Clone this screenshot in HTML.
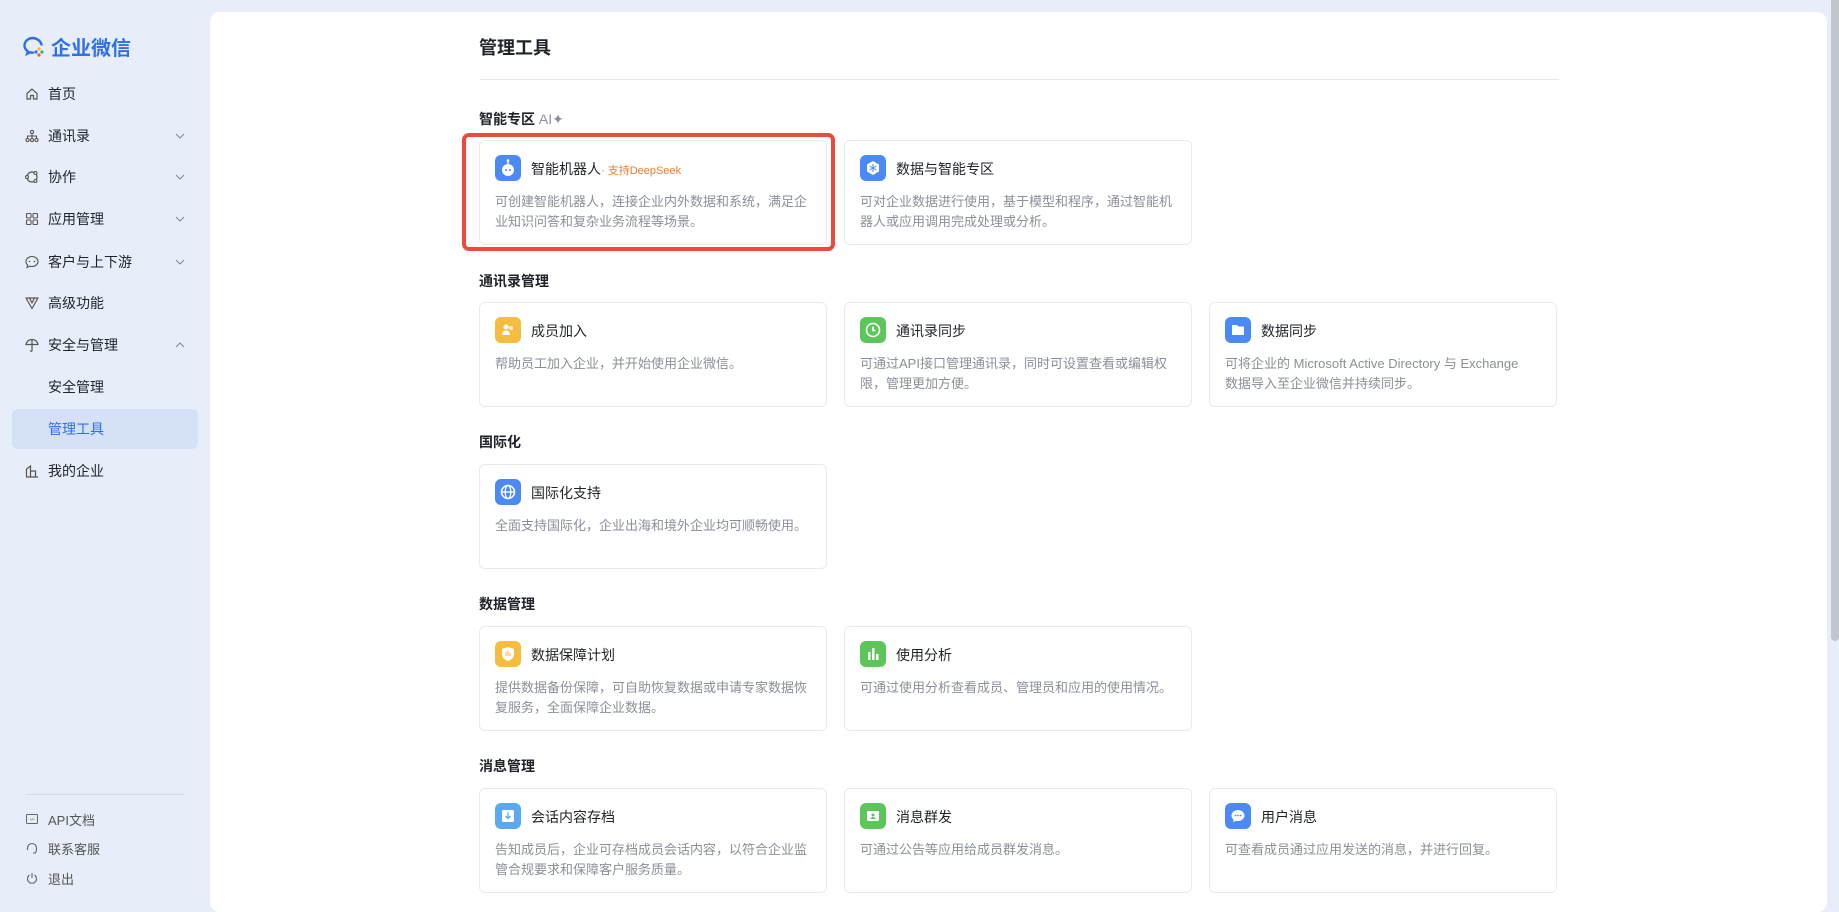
<!DOCTYPE html>
<html><head><meta charset="utf-8"><style>
*{margin:0;padding:0;box-sizing:border-box}
body{width:1839px;height:906px;overflow:hidden;background:#e8eef9;font-family:"Liberation Sans","Noto Sans CJK SC",sans-serif;position:relative;color:#1f2329}
.side{position:absolute;left:0;top:0;width:210px;height:906px}
.logo{position:absolute;left:22px;top:32px;display:flex;align-items:center}
.logo span{font-size:20px;font-weight:bold;color:#2f6fe8;margin-left:5px}
.item{position:absolute;left:0;width:210px;height:42px;display:flex;align-items:center;font-size:14px;color:#1f2329}
.item svg.ic{position:absolute;left:25px;width:14px;height:14px}
.item .t{position:absolute;left:48px}
.item .ch{position:absolute;left:174px;width:12px;height:12px}
.hl{position:absolute;left:12px;top:409px;width:186px;height:40px;background:#d4e1f7;border-radius:6px}
.bot{position:absolute;left:0;width:210px;height:24px;display:flex;align-items:center;font-size:13px;color:#555}
.bot svg{position:absolute;left:26px;width:12px;height:12px}
.bot .t{position:absolute;left:48px}
.panel{position:absolute;left:210px;top:12px;width:1617px;height:900px;background:#fff;border-radius:10px}
.sb{position:absolute;left:1831px;top:0;width:8px;height:641px;background:#c1c5ce;border-radius:0 0 4px 4px}
.h1{position:absolute;left:479px;top:34px;font-size:18px;font-weight:bold}
.div{position:absolute;left:480px;top:79px;width:1079px;height:1px;background:#e6e8eb}
.sec{position:absolute;left:479px;font-size:14px;font-weight:bold;color:#1f2329}
.card{position:absolute;width:348px;height:105px;border:1px solid #e8eaed;border-radius:6px;background:#fff}
.card .i{position:absolute;left:15px;top:14px;width:26px;height:26px;border-radius:6px}
.card .tt{position:absolute;left:51px;top:18px;font-size:14px;color:#1f2329}
.card .d{position:absolute;left:15px;top:51px;width:320px;font-size:13px;line-height:20px;color:#8a8f99}
.red{position:absolute;left:462px;top:133px;width:373px;height:118px;border:4px solid #ee4a3c;border-radius:7px}
</style></head><body>
<div class="side">
 <div class="logo"><svg width="24" height="24" viewBox="0 0 24 24"><path d="M11 3C6 3 2.5 6.5 2.5 10.5c0 2.5 1.3 4.5 3.3 5.8l-.7 2.5 3-1.5c1 .3 1.9.4 2.9.4" fill="none" stroke="#2f6fe8" stroke-width="2.4" stroke-linecap="round"/><path d="M19.5 9.5C18.6 6 15.3 3.5 11 3" fill="none" stroke="#2f6fe8" stroke-width="2.4" stroke-linecap="round"/><circle cx="17" cy="14" r="1.6" fill="#f5b82e"/><circle cx="20" cy="17" r="1.6" fill="#3fb34f"/><circle cx="17" cy="20" r="1.6" fill="#ee5a2a"/><circle cx="14" cy="17" r="1.6" fill="#2f6fe8"/></svg><span>企业微信</span></div>
 <div class="hl"></div>
 <div class="item" style="top:73px"><svg class="ic" viewBox="0 0 14 14"><path d="M2 6.5L7 2l5 4.5V12H8.5V8.5h-3V12H2z" fill="none" stroke="#555" stroke-width="1.2"/></svg><span class="t">首页</span></div>
 <div class="item" style="top:115px"><svg class="ic" viewBox="0 0 14 14"><circle cx="7" cy="3" r="1.6" fill="none" stroke="#555" stroke-width="1.1"/><circle cx="2.5" cy="11" r="1.6" fill="none" stroke="#555" stroke-width="1.1"/><circle cx="7" cy="11" r="1.6" fill="none" stroke="#555" stroke-width="1.1"/><circle cx="11.5" cy="11" r="1.6" fill="none" stroke="#555" stroke-width="1.1"/><path d="M2.5 9V7h9v2M7 5v4" fill="none" stroke="#555" stroke-width="1.1"/></svg><span class="t">通讯录</span><svg class="ch" viewBox="0 0 12 12"><path d="M2 4l4 4 4-4" fill="none" stroke="#888" stroke-width="1.1"/></svg></div>
 <div class="item" style="top:156px"><svg class="ic" viewBox="0 0 14 14"><circle cx="7" cy="7" r="5" fill="none" stroke="#555" stroke-width="1.2"/><circle cx="2" cy="7" r="1.5" fill="#e8eef9" stroke="#555" stroke-width="1.1"/><circle cx="10.5" cy="3" r="1.5" fill="#e8eef9" stroke="#555" stroke-width="1.1"/><circle cx="10.5" cy="11" r="1.5" fill="#e8eef9" stroke="#555" stroke-width="1.1"/></svg><span class="t">协作</span><svg class="ch" viewBox="0 0 12 12"><path d="M2 4l4 4 4-4" fill="none" stroke="#888" stroke-width="1.1"/></svg></div>
 <div class="item" style="top:198px"><svg class="ic" viewBox="0 0 14 14"><rect x="1.5" y="1.5" width="4.5" height="4.5" rx="1" fill="none" stroke="#555" stroke-width="1.1"/><rect x="8" y="1.5" width="4.5" height="4.5" rx="1" fill="none" stroke="#555" stroke-width="1.1"/><rect x="1.5" y="8" width="4.5" height="4.5" rx="1" fill="none" stroke="#555" stroke-width="1.1"/><rect x="8" y="8" width="4.5" height="4.5" rx="1" fill="none" stroke="#555" stroke-width="1.1"/></svg><span class="t">应用管理</span><svg class="ch" viewBox="0 0 12 12"><path d="M2 4l4 4 4-4" fill="none" stroke="#888" stroke-width="1.1"/></svg></div>
 <div class="item" style="top:241px"><svg class="ic" viewBox="0 0 14 14"><path d="M7 1.5c3.3 0 6 2.2 6 5s-2.7 5-6 5c-.8 0-1.6-.1-2.3-.4L2 12.5l.7-2.3C1.6 9.2 1 8 1 6.5c0-2.8 2.7-5 6-5z" fill="none" stroke="#555" stroke-width="1.1"/><circle cx="4.5" cy="6.5" r=".8" fill="#555"/><circle cx="9.5" cy="6.5" r=".8" fill="#555"/></svg><span class="t">客户与上下游</span><svg class="ch" viewBox="0 0 12 12"><path d="M2 4l4 4 4-4" fill="none" stroke="#888" stroke-width="1.1"/></svg></div>
 <div class="item" style="top:282px"><svg class="ic" viewBox="0 0 14 14"><path d="M1 2h12L7 12.5z M4.5 2L7 7l2.5-5" fill="none" stroke="#555" stroke-width="1.2" stroke-linejoin="round"/></svg><span class="t">高级功能</span></div>
 <div class="item" style="top:324px"><svg class="ic" viewBox="0 0 14 14"><path d="M1 6.5C1.5 3.5 4 1.5 7 1.5s5.5 2 6 5z M7 1v11.5c0 1-1.5 1-1.8 0" fill="none" stroke="#555" stroke-width="1.2"/></svg><span class="t">安全与管理</span><svg class="ch" viewBox="0 0 12 12"><path d="M2 8l4-4 4 4" fill="none" stroke="#888" stroke-width="1.1"/></svg></div>
 <div class="item" style="top:366px"><span class="t">安全管理</span></div>
 <div class="item" style="top:408px;color:#2f6fe8"><span class="t">管理工具</span></div>
 <div class="item" style="top:450px"><svg class="ic" viewBox="0 0 14 14"><path d="M1.5 13V5l4-3v11M5.5 13V7h5v6M1 13h12" fill="none" stroke="#555" stroke-width="1.2"/></svg><span class="t">我的企业</span></div>
 <div style="position:absolute;left:26px;top:794px;width:159px;height:1px;background:#d5dbe6"></div>
 <div class="bot" style="top:807px"><svg viewBox="0 0 12 12"><rect x=".5" y="1.5" width="11" height="9" rx="1" fill="none" stroke="#666"/><text x="6" y="7.5" font-size="3" text-anchor="middle" fill="#666" font-family="Liberation Sans">API</text></svg><span class="t">API文档</span></div>
 <div class="bot" style="top:836px"><svg viewBox="0 0 12 12"><path d="M1.5 8V6a4.5 4.5 0 0 1 9 0v2M7 11h2.5l1-3" fill="none" stroke="#666" stroke-width="1.1"/></svg><span class="t">联系客服</span></div>
 <div class="bot" style="top:866px"><svg viewBox="0 0 12 12"><path d="M3.5 3a4.5 4.5 0 1 0 5 0M6 1v5" fill="none" stroke="#666" stroke-width="1.1"/></svg><span class="t">退出</span></div>
</div>
<div class="panel"></div>
<div class="sb"></div>
<div class="h1">管理工具</div>
<div class="div"></div>

<div class="sec" style="top:109px">智能专区 <span style="color:#8a8f99;font-weight:normal">AI✦</span></div>
<div class="card" style="left:479px;top:140px"><div class="i" style="background:#4b8af5"><svg width="26" height="26" viewBox="0 0 26 26"><circle cx="13" cy="15" r="6" fill="#fff"/><line x1="13" y1="9" x2="13" y2="6" stroke="#fff" stroke-width="1.5"/><circle cx="13" cy="5.5" r="1.3" fill="#fff"/><circle cx="11" cy="15" r="1" fill="#4b8af5"/><circle cx="15" cy="15" r="1" fill="#4b8af5"/></svg></div><div class="tt">智能机器人<span style="color:#f07d2a;font-size:11px">· 支持DeepSeek</span></div><div class="d">可创建智能机器人，连接企业内外数据和系统，满足企业知识问答和复杂业务流程等场景。</div></div>
<div class="card" style="left:844px;top:140px"><div class="i" style="background:#4b8af5"><svg width="26" height="26" viewBox="0 0 26 26"><path d="M13 6l6 3.5v7L13 20l-6-3.5v-7z" fill="#fff"/><path d="M13 9v8M9.5 11l7 4M16.5 11l-7 4" stroke="#4b8af5" stroke-width="1"/></svg></div><div class="tt">数据与智能专区</div><div class="d">可对企业数据进行使用，基于模型和程序，通过智能机器人或应用调用完成处理或分析。</div></div>
<div class="red"></div>

<div class="sec" style="top:271px">通讯录管理</div>
<div class="card" style="left:479px;top:302px"><div class="i" style="background:#f5bd3f"><svg width="26" height="26" viewBox="0 0 26 26"><circle cx="11" cy="10" r="2.5" fill="#fff"/><path d="M7 18c0-3 2-4.5 4-4.5s4 1.5 4 4.5z" fill="#fff"/><circle cx="16" cy="11" r="2" fill="#fff" opacity=".8"/></svg></div><div class="tt">成员加入</div><div class="d">帮助员工加入企业，并开始使用企业微信。</div></div>
<div class="card" style="left:844px;top:302px"><div class="i" style="background:#5cc65b"><svg width="26" height="26" viewBox="0 0 26 26"><circle cx="13" cy="13" r="6.5" fill="none" stroke="#fff" stroke-width="1.6"/><path d="M13 9.5v4h2.5" fill="none" stroke="#fff" stroke-width="1.6"/></svg></div><div class="tt">通讯录同步</div><div class="d">可通过API接口管理通讯录，同时可设置查看或编辑权限，管理更加方便。</div></div>
<div class="card" style="left:1209px;top:302px"><div class="i" style="background:#4b8af5"><svg width="26" height="26" viewBox="0 0 26 26"><path d="M7 8h5l1.5 1.5H19V18H7z" fill="#fff"/></svg></div><div class="tt">数据同步</div><div class="d">可将企业的 Microsoft Active Directory 与 Exchange<br>数据导入至企业微信并持续同步。</div></div>

<div class="sec" style="top:432px">国际化</div>
<div class="card" style="left:479px;top:464px"><div class="i" style="background:#4b8af5"><svg width="26" height="26" viewBox="0 0 26 26"><circle cx="13" cy="13" r="6.5" fill="none" stroke="#fff" stroke-width="1.6"/><ellipse cx="13" cy="13" rx="2.8" ry="6.5" fill="none" stroke="#fff" stroke-width="1.3"/><path d="M6.5 13h13" stroke="#fff" stroke-width="1.3"/></svg></div><div class="tt">国际化支持</div><div class="d">全面支持国际化，企业出海和境外企业均可顺畅使用。</div></div>

<div class="sec" style="top:594px">数据管理</div>
<div class="card" style="left:479px;top:626px"><div class="i" style="background:#f5bd3f"><svg width="26" height="26" viewBox="0 0 26 26"><path d="M13 6l6 2v5c0 4-3 6-6 7-3-1-6-3-6-7V8z" fill="#fff"/><path d="M11 11v4M13 10v5M15 12v3" stroke="#f5bd3f" stroke-width="1"/></svg></div><div class="tt">数据保障计划</div><div class="d">提供数据备份保障，可自助恢复数据或申请专家数据恢复服务，全面保障企业数据。</div></div>
<div class="card" style="left:844px;top:626px"><div class="i" style="background:#5cc65b"><svg width="26" height="26" viewBox="0 0 26 26"><rect x="8" y="11" width="2.5" height="8" fill="#fff"/><rect x="12" y="7" width="2.5" height="12" fill="#fff"/><rect x="16" y="13" width="2.5" height="6" fill="#fff"/></svg></div><div class="tt">使用分析</div><div class="d">可通过使用分析查看成员、管理员和应用的使用情况。</div></div>

<div class="sec" style="top:756px">消息管理</div>
<div class="card" style="left:479px;top:788px"><div class="i" style="background:#5aa9f0"><svg width="26" height="26" viewBox="0 0 26 26"><rect x="7" y="7" width="12" height="12" rx="1.5" fill="#fff"/><path d="M13 9.5v6M10.5 13l2.5 2.5 2.5-2.5" fill="none" stroke="#5aa9f0" stroke-width="1.3"/></svg></div><div class="tt">会话内容存档</div><div class="d">告知成员后，企业可存档成员会话内容，以符合企业监管合规要求和保障客户服务质量。</div></div>
<div class="card" style="left:844px;top:788px"><div class="i" style="background:#5cc65b"><svg width="26" height="26" viewBox="0 0 26 26"><rect x="7" y="8" width="12" height="10" rx="1.5" fill="#fff"/><circle cx="13" cy="12" r="1.5" fill="#5cc65b"/><path d="M10.5 16c.5-1.5 1.5-2 2.5-2s2 .5 2.5 2" fill="#5cc65b"/></svg></div><div class="tt">消息群发</div><div class="d">可通过公告等应用给成员群发消息。</div></div>
<div class="card" style="left:1209px;top:788px"><div class="i" style="background:#4b8af5"><svg width="26" height="26" viewBox="0 0 26 26"><path d="M13 7c3.6 0 6.5 2.5 6.5 5.5S16.6 18 13 18c-.8 0-1.5-.1-2.2-.3L8 19.5l.8-2.6C7.4 15.9 6.5 14.3 6.5 12.5 6.5 9.5 9.4 7 13 7z" fill="#fff"/><circle cx="10.5" cy="12.5" r=".9" fill="#4b8af5"/><circle cx="13" cy="12.5" r=".9" fill="#4b8af5"/><circle cx="15.5" cy="12.5" r=".9" fill="#4b8af5"/></svg></div><div class="tt">用户消息</div><div class="d">可查看成员通过应用发送的消息，并进行回复。</div></div>
</body></html>
